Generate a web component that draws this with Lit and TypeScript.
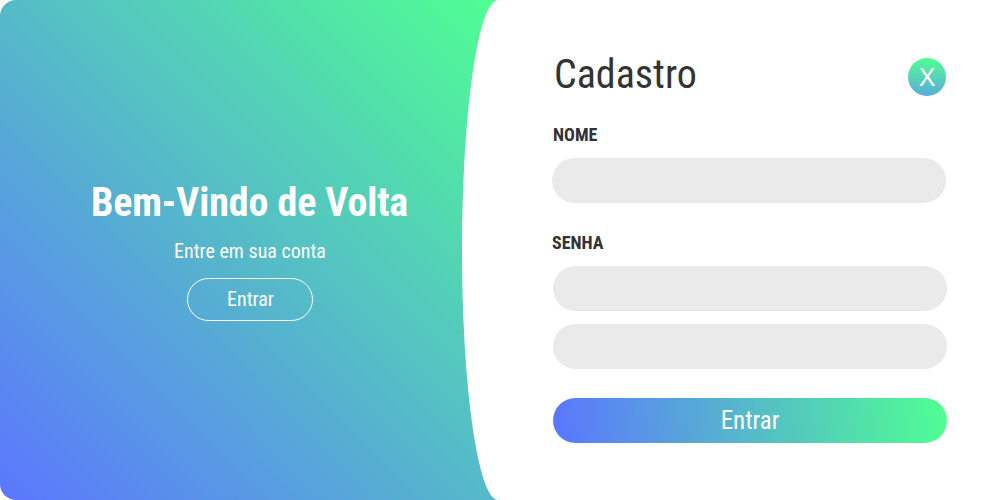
import { LitElement, html, css } from "lit";
import { customElement } from "lit/decorators.js";

@customElement("app-root")
class AppRoot extends LitElement {
  static styles = css`
    :host { display: block; width: 1000px; height: 500px; font-family: "Roboto Condensed", Roboto, sans-serif; font-stretch: 75%; color: #333; background: #fff; }
    * { box-sizing: border-box; }
    .page { display: grid; grid-template-columns: 500px 500px; height: 500px; overflow: hidden; }
    .welcome { position: relative; border-radius: 16px 0 0 16px; overflow: hidden; background: linear-gradient(45deg, #5b76ff, #4fff92); color: #fff; display: flex; flex-direction: column; align-items: center; padding-top: 179px; }
    .curve { position: absolute; left: 462px; top: 0; width: 72px; height: 500px; border-radius: 50%; background: #fff; }
    h1, h2, p { margin: 0; }
    h1 { font-size: 40px; line-height: 48px; font-weight: 700; white-space: nowrap; letter-spacing: -0.1px; padding-right: 1px; }
    .welcome p { font-size: 20px; line-height: 24px; margin-top: 12px; }
    button { font: inherit; color: #fff; border: 0; padding: 0; display: flex; align-items: center; justify-content: center; }
    .outline { width: 126px; height: 43px; margin-top: 15px; border: 1px solid #fff; border-radius: 22px; background: none; font-size: 20px; padding: 0 0 2px 1px; }
    .form { padding: 51px 53px 0 53px; display: flex; flex-direction: column; }
    .head { display: flex; justify-content: space-between; padding-right: 1px; }
    h2 { font-size: 40px; line-height: 48px; font-weight: 400; padding-left: 1px; }
    .close { width: 38px; height: 38px; margin-top: 7px; border-radius: 50%; background: linear-gradient(#4fff92, #5aabdc); font-family: "Liberation Sans", sans-serif; font-stretch: 100%; font-size: 25px; }
    label { font-size: 18px; line-height: 22px; font-weight: 700; }
    .name { margin-top: 25px; }
    .pass { margin: 29px 0 0 -1px; }
    .field { width: 394px; height: 45px; border-radius: 23px; border: 0; background: #eaeaea; padding: 0 20px; }
    .f1 { margin: 12px 0 0 -1px; }
    .f2 { margin-top: 12px; }
    .f3 { margin-top: 13px; }
    .submit { width: 394px; height: 45px; margin-top: 29px; border-radius: 23px; background: linear-gradient(83deg, #5b76ff, #4fff92); font-size: 25px; }
  `;
  render() {
    return html`<main class="page">
      <section class="welcome"><div class="curve"></div>
        <h1>Bem-Vindo de Volta</h1><p>Entre em sua conta</p><button class="outline">Entrar</button>
      </section>
      <section class="form">
        <div class="head"><h2>Cadastro</h2><button class="close">X</button></div>
        <label class="name">NOME</label><input class="field f1">
        <label class="pass">SENHA</label><input class="field f2" type="password"><input class="field f3" type="password">
        <button class="submit">Entrar</button>
      </section></main>`;
  }
}
